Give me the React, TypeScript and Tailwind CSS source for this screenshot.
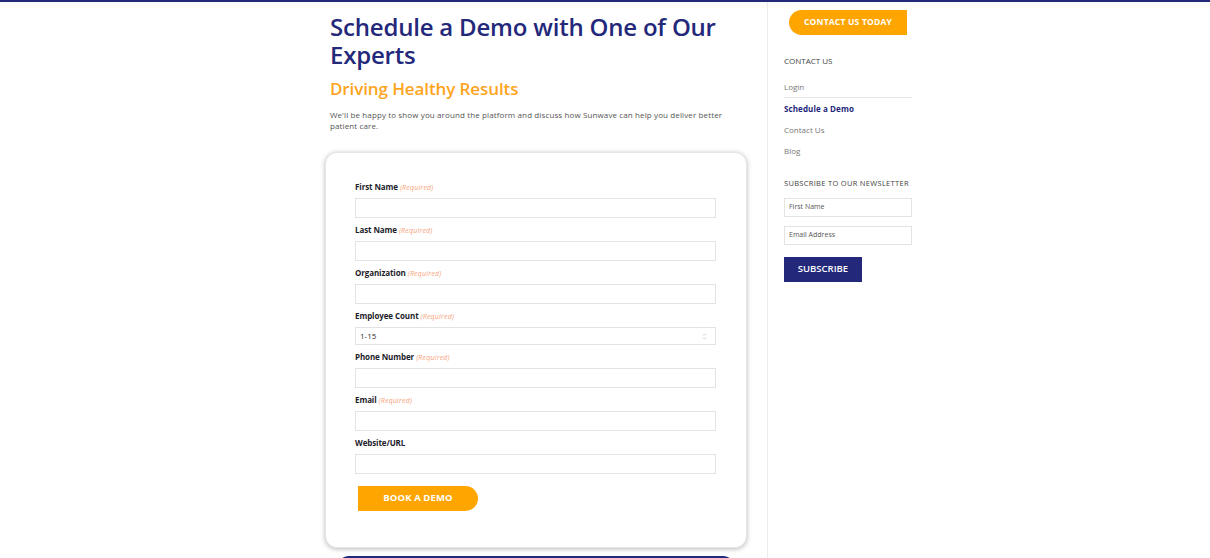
import React from 'react';

const font = { fontFamily: '"Open Sans", "Liberation Sans", sans-serif' };

const fields = [
  { label: 'First Name', required: true },
  { label: 'Last Name', required: true },
  { label: 'Organization', required: true },
  { label: 'Employee Count', required: true, select: true },
  { label: 'Phone Number', required: true },
  { label: 'Email', required: true },
  { label: 'Website/URL', required: false },
];

const sideLinks = [
  { name: 'Login', active: false },
  { name: 'Schedule a Demo', active: true },
  { name: 'Contact Us', active: false },
  { name: 'Blog', active: false },
];

const Field: React.FC<{ label: string; required: boolean; select?: boolean }> = ({ label, required, select }) => (
  <div className="mb-[6px]">
    <div className="h-3 leading-3 text-[8px] font-bold text-[#1d1d2b] mb-[5px] tracking-[-0.1px]">
      {label}
      {required && (
        <span className="ml-[2px] text-[7px] font-normal italic text-[#f8a47c] tracking-[0.2px]">(Required)</span>
      )}
    </div>
    {select ? (
      <div className="h-[18px] border border-[#e3e3e3] flex items-center justify-between px-[4px] text-[8px] text-[#333]">
        <span>1-15</span>
        <svg width="5" height="7" viewBox="0 0 5 7" className="mr-[4px]">
          <path d="M1 2.5 L2.5 1 L4 2.5" fill="none" stroke="#bbb" strokeWidth="0.8" />
          <path d="M1 4.5 L2.5 6 L4 4.5" fill="none" stroke="#bbb" strokeWidth="0.8" />
        </svg>
      </div>
    ) : (
      <div className="h-[20px] border border-[#e3e3e3] bg-white" />
    )}
  </div>
);

export default function App() {
  return (
    <div className="min-h-[558px] bg-white overflow-hidden" style={font}>
      <div className="h-[2px] bg-[#23287a] shadow-[0_2px_6px_rgba(0,0,0,0.08)]" />
      <div className="flex pl-[325px]">
        {/* Main column */}
        <main className="w-[422px]">
          <div className="pl-[5px]">
            <h1 className="mt-[11px] text-[24px] leading-[28px] font-semibold text-[#23287a] w-[400px] tracking-[-0.2px]">
              Schedule a Demo with One of Our Experts
            </h1>
            <h2 className="mt-[8px] text-[17px] leading-[24px] font-semibold text-[#ffa41c] tracking-[-0.1px]">
              Driving Healthy Results
            </h2>
            <p className="mt-[8px] text-[8px] leading-[11px] text-[#555] w-[412px] tracking-[0.12px]">
              We'll be happy to show you around the platform and discuss how Sunwave can help you deliver better patient care.
            </p>
          </div>

          <div className="mt-[21px] w-[422px] rounded-[12px] bg-white border border-[#e6e6e6] shadow-[0_1px_5px_rgba(0,0,0,0.28)] pt-[28px] pb-[36px] pl-[29px] pr-[30px]">
            {fields.map((f) => (
              <Field key={f.label} label={f.label} required={f.required} select={f.select} />
            ))}
            <button className="mt-[6px] ml-[3px] w-[120px] h-[25px] bg-[#ffa500] rounded-r-full text-white text-[9.5px] font-bold tracking-[0.1px]">
              BOOK A DEMO
            </button>
          </div>

          <div className="mt-[8px] mx-[12px] h-[12px] rounded-t-[14px] bg-[#23287a]" />
        </main>

        {/* Sidebar */}
        <aside className="ml-[20px] border-l border-[#ececec] pl-[16px] min-h-[556px] w-[200px]">
          <button className="mt-[8px] ml-[5px] w-[118px] h-[25px] bg-[#ffa500] rounded-l-full text-white text-[8.5px] font-bold tracking-[0.2px]">
            CONTACT US TODAY
          </button>
          <div className="mt-[20px] text-[8px] leading-[12px] text-[#444]">CONTACT US</div>
          <nav className="mt-[9px] w-[128px]">
            {sideLinks.map((l, i) => (
              <div
                key={l.name}
                className={`h-[21px] flex items-center text-[8px] ${i === 0 ? 'border-b border-[#e6e6e6] h-[22px]' : ''} ${
                  l.active ? 'font-bold text-[#23287a] tracking-[0.1px]' : 'text-[#777]'
                }`}
              >
                {l.name}
              </div>
            ))}
          </nav>
          <div className="mt-[16px] text-[7.5px] leading-[12px] text-[#444] tracking-[0.3px]">SUBSCRIBE TO OUR NEWSLETTER</div>
          <div className="mt-[9px] w-[128px] h-[19px] border border-[#e3e3e3] flex items-center px-[4px] text-[7px] text-[#555]">
            First Name
          </div>
          <div className="mt-[9px] w-[128px] h-[19px] border border-[#e3e3e3] flex items-center px-[4px] text-[7px] text-[#555]">
            Email Address
          </div>
          <button className="mt-[12px] w-[78px] h-[25px] bg-[#23287a] text-white text-[9.5px] font-semibold">
            SUBSCRIBE
          </button>
        </aside>
      </div>
    </div>
  );
}
